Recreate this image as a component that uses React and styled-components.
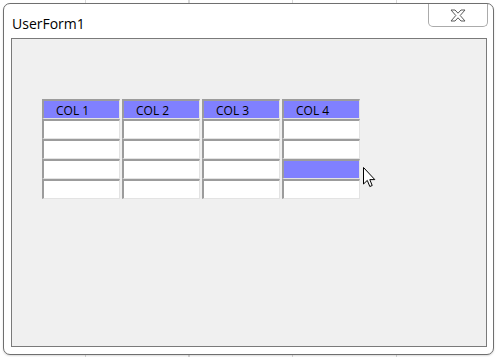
import React from "react";
import styled, { createGlobalStyle } from "styled-components";

const Global = createGlobalStyle`
  html, body {
    margin: 0;
    padding: 0;
  }
  body {
    width: 496px;
    height: 357px;
    overflow: hidden;
    background-color: #ffffff;
    background-image: repeating-linear-gradient(90deg, transparent 0, transparent 85px, #d9d9d9 85px, #d9d9d9 86px, transparent 86px, transparent 103.5px);
    font-family: "Open Sans", "Noto Sans", sans-serif;
  }
`

const Stage = styled.div`
  padding: 3px 0 0 3px;
`

const Window = styled.div`
  width: 491px;
  height: 352px;
  box-sizing: border-box;
  border: 1px solid #6f6f6f;
  border-radius: 7px;
  background: #ffffff;
  display: flex;
  flex-direction: column;
  box-shadow: 0 1px 2px rgba(0, 0, 0, 0.15);
`

const TitleBar = styled.div`
  height: 34px;
  display: flex;
  align-items: flex-start;
  justify-content: space-between;
`

const Title = styled.span`
  font-size: 14px;
  color: #000;
  padding: 11px 0 0 8px;
  line-height: 18px;
`

const CloseBtn = styled.div`
  width: 60px;
  height: 23px;
  box-sizing: border-box;
  margin-right: 5px;
  border: 1px solid #ababab;
  border-top: none;
  border-radius: 0 0 5px 5px;
  display: flex;
  align-items: center;
  justify-content: center;
`

const Client = styled.div`
  flex: 1;
  margin: 0 6px 7px 7px;
  border: 1px solid #7a7a7a;
  background: #f0f0f0;
  padding: 60px 30px;
  position: relative;
`

const Grid = styled.div`
  display: grid;
  grid-template-columns: repeat(4, 78px);
  grid-auto-rows: 20px;
  column-gap: 2px;
`

const Cell = styled.div`
  box-sizing: border-box;
  border-top: 2px solid #9c9c9c;
  border-left: 2px solid #9c9c9c;
  border-right: 1px solid #e3e3e3;
  border-bottom: 1px solid #e3e3e3;
  background: ${p => (p.$hl ? "#8080ff" : "#ffffff")};
  font-family: "Open Sans", "Noto Sans", sans-serif;
  font-size: 12px;
  color: #000;
  line-height: 20px;
  padding-left: 12px;
  overflow: hidden;
  white-space: nowrap;
`

const Cursor = styled.svg`
  position: absolute;
  left: 351px;
  top: 128px;
`

function CloseGlyph() {
  return (
    <svg width="16" height="13" viewBox="0 0 16 13">
      <path
        d="M1 1 H5 L8 4.2 L11 1 H15 L10.2 6.5 L15 12 H11 L8 8.8 L5 12 H1 L5.8 6.5 Z"
        fill="#ffffff"
        stroke="#5a5a5a"
        strokeWidth="1"
        strokeLinejoin="round"
      />
    </svg>
  )
}

export default function App() {
  const cols = ["COL 1", "COL 2", "COL 3", "COL 4"]
  const rows = [0, 1, 2, 3]

  return (
    <>
      <Global />
      <Stage>
        <Window>
          <TitleBar>
            <Title>UserForm1</Title>
            <CloseBtn>
              <CloseGlyph />
            </CloseBtn>
          </TitleBar>
          <Client>
            <Grid>
              {cols.map(c => (
                <Cell key={c} $hl>{c}</Cell>
              ))}
              {rows.map(r =>
                cols.map((c, i) => (
                  <Cell key={c + r} $hl={r === 2 && i === 3} />
                ))
              )}
            </Grid>
            <Cursor width="13" height="21" viewBox="0 0 13 21">
              <path
                d="M0.5 0.5 V17 L4.3 13.4 L6.8 19.5 L9.2 18.5 L6.8 12.6 H11.8 Z"
                fill="#ffffff"
                stroke="#000000"
                strokeWidth="1"
                strokeLinejoin="miter"
              />
            </Cursor>
          </Client>
        </Window>
      </Stage>
    </>
  )
}
